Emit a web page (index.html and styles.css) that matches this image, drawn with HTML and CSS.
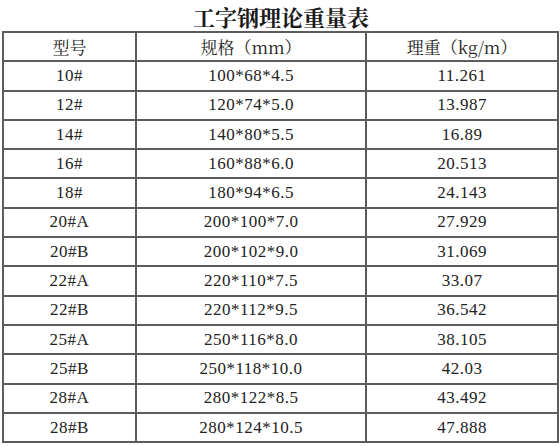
FILE: index.html
```html
<!DOCTYPE html>
<html lang="zh-CN">
<head>
<meta charset="utf-8">
<title>工字钢理论重量表</title>
<link rel="stylesheet" href="styles.css">
</head>
<body>
<div class="page">
  <h1 class="title">工字钢理论重量表</h1>
  <table class="weights">
    <colgroup>
      <col class="c1"><col class="c2"><col class="c3">
    </colgroup>
    <thead>
      <tr><th>型号</th><th>规格（mm）</th><th>理重（kg/m）</th></tr>
    </thead>
    <tbody>
      <tr><td>10#</td><td>100*68*4.5</td><td>11.261</td></tr>
      <tr><td>12#</td><td>120*74*5.0</td><td>13.987</td></tr>
      <tr><td>14#</td><td>140*80*5.5</td><td>16.89</td></tr>
      <tr><td>16#</td><td>160*88*6.0</td><td>20.513</td></tr>
      <tr><td>18#</td><td>180*94*6.5</td><td>24.143</td></tr>
      <tr><td>20#A</td><td>200*100*7.0</td><td>27.929</td></tr>
      <tr><td>20#B</td><td>200*102*9.0</td><td>31.069</td></tr>
      <tr><td>22#A</td><td>220*110*7.5</td><td>33.07</td></tr>
      <tr><td>22#B</td><td>220*112*9.5</td><td>36.542</td></tr>
      <tr><td>25#A</td><td>250*116*8.0</td><td>38.105</td></tr>
      <tr><td>25#B</td><td>250*118*10.0</td><td>42.03</td></tr>
      <tr><td>28#A</td><td>280*122*8.5</td><td>43.492</td></tr>
      <tr><td>28#B</td><td>280*124*10.5</td><td>47.888</td></tr>
    </tbody>
  </table>
</div>
</body>
</html>
```
FILE: styles.css
```css
html, body {
  margin: 0;
  padding: 0;
  background: #ffffff;
}
.page {
  width: 560px;
  height: 446px;
  overflow: hidden;
}
.title {
  margin: 0;
  height: 31px;
  line-height: 34px;
  text-align: center;
  font-family: "Noto Serif CJK SC", "Noto Sans CJK SC", serif;
  font-weight: 700;
  font-size: 22px;
  color: #1a1a1a;
  padding-left: 2px;
}
.weights {
  margin-left: 2px;
  width: 555px;
  border-collapse: collapse;
  table-layout: fixed;
  font-family: "Liberation Serif", "Noto Serif CJK SC", "Noto Sans CJK SC", serif;
  font-size: 17px;
  color: #222222;
}
.c1 { width: 133px; }
.c2 { width: 230px; }
.c3 { width: 192px; }
.weights th,
.weights td {
  border: 2px solid #5c5c5c;
  height: 27.3px;
  padding: 0;
  text-align: center;
  vertical-align: middle;
  font-weight: 400;
  letter-spacing: 0.5px;
  line-height: 20px;
}
.weights th {
  font-family: "Noto Serif CJK SC", "Liberation Serif", "Noto Sans CJK SC", serif;
  letter-spacing: 0;
}
```
